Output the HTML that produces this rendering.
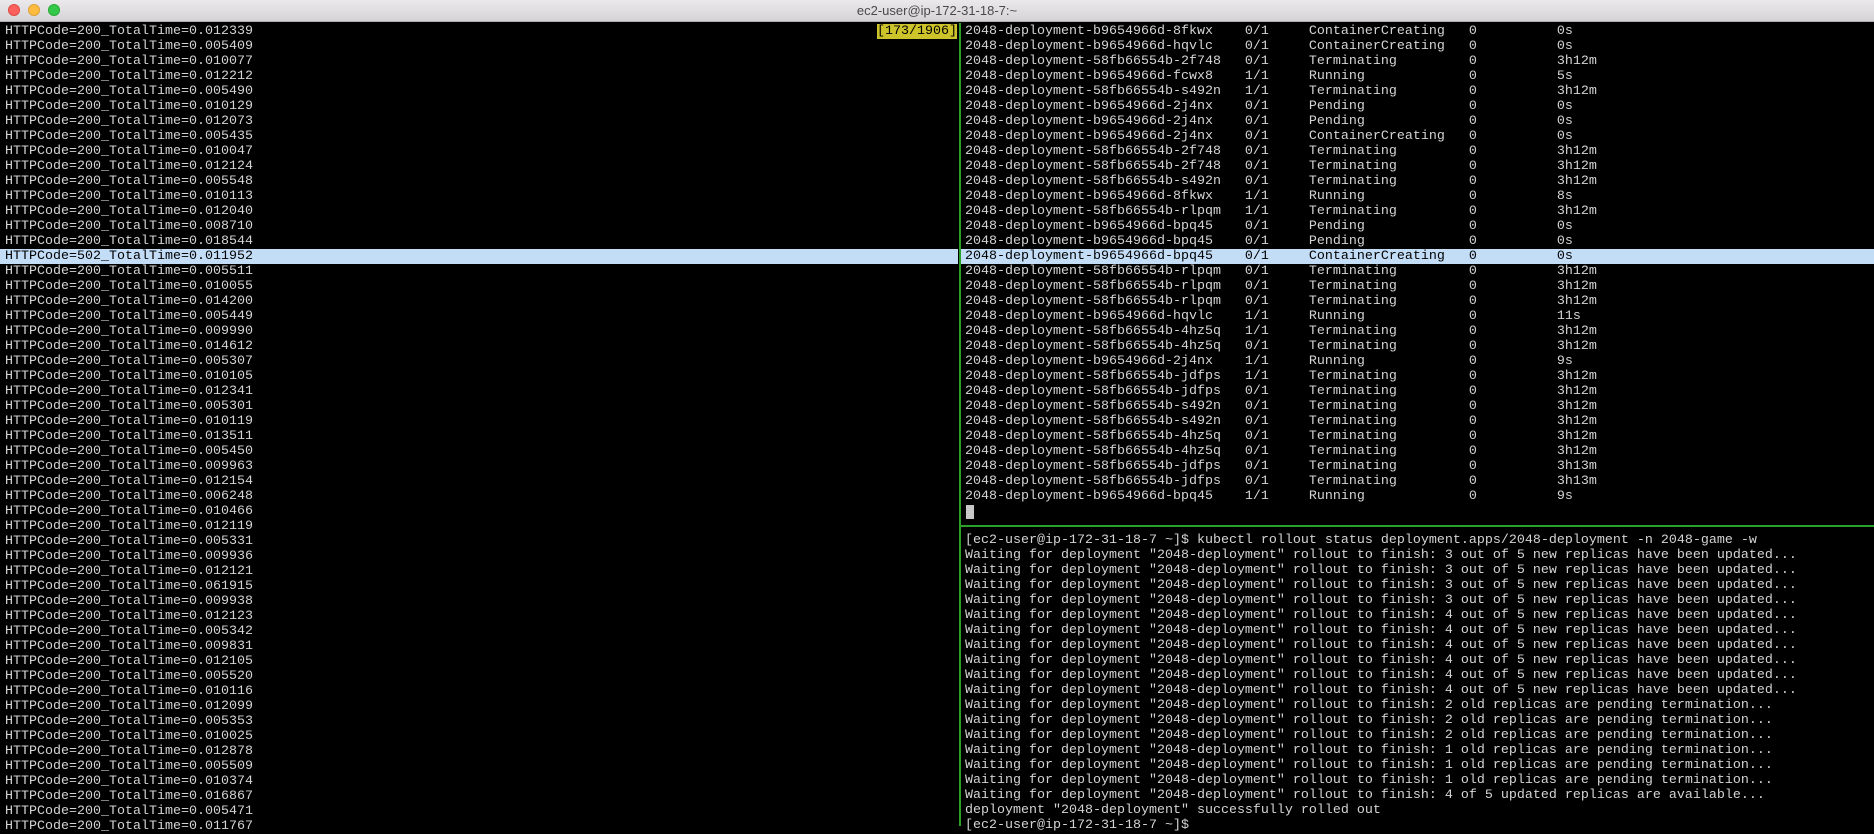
<!DOCTYPE html>
<html><head><meta charset="utf-8"><style>
*{margin:0;padding:0;box-sizing:border-box}
body{width:1874px;height:826px;background:#000;overflow:hidden;position:relative;font-family:"Liberation Mono","DejaVu Sans Mono",monospace}
#tb{position:absolute;left:0;top:0;width:1874px;height:22px;background:linear-gradient(#ebe9eb,#d5d3d5);border-bottom:1px solid #b0aeb0}
#tb .t{position:absolute;left:0;right:0;top:3px;text-align:center;font:13px "Liberation Sans",sans-serif;color:#4a4a4a}
.dot{position:absolute;top:4px;width:12px;height:12px;border-radius:50%}
pre{position:absolute;font-family:"Liberation Mono","DejaVu Sans Mono",monospace;font-size:13.333px;line-height:15px;color:#d4d4d4;white-space:pre}
.hl{position:absolute;height:15px;background:#c3ddf6}
</style></head><body>
<div id="tb"><div class="dot" style="left:8px;background:#fc605c;border:1px solid #de4a45"></div><div class="dot" style="left:28px;background:#fdbc40;border:1px solid #dea236"></div><div class="dot" style="left:48px;background:#34c84a;border:1px solid #27aa35"></div><div class="t">ec2-user@ip-172-31-18-7:~</div></div>
<div class="hl" style="left:0;top:249px;width:958px"></div>
<div class="hl" style="left:961px;top:249px;width:913px"></div>
<div style="position:absolute;left:959px;top:23px;width:2px;height:803px;background:#2aa02a"></div>
<div style="position:absolute;left:961px;top:525px;width:913px;height:2px;background:#2aa02a"></div>
<div style="position:absolute;left:877px;top:24px;width:80px;height:15px;background:#cdc42c"></div>
<pre style="left:877px;top:24px;color:#000">[173/1906]</pre>
<div style="position:absolute;left:966px;top:505px;width:8px;height:14px;background:#c8c8c8"></div>
<pre style="left:5px;top:24px">HTTPCode=200_TotalTime=0.012339
HTTPCode=200_TotalTime=0.005409
HTTPCode=200_TotalTime=0.010077
HTTPCode=200_TotalTime=0.012212
HTTPCode=200_TotalTime=0.005490
HTTPCode=200_TotalTime=0.010129
HTTPCode=200_TotalTime=0.012073
HTTPCode=200_TotalTime=0.005435
HTTPCode=200_TotalTime=0.010047
HTTPCode=200_TotalTime=0.012124
HTTPCode=200_TotalTime=0.005548
HTTPCode=200_TotalTime=0.010113
HTTPCode=200_TotalTime=0.012040
HTTPCode=200_TotalTime=0.008710
HTTPCode=200_TotalTime=0.018544
<span style="color:#000">HTTPCode=502_TotalTime=0.011952</span>
HTTPCode=200_TotalTime=0.005511
HTTPCode=200_TotalTime=0.010055
HTTPCode=200_TotalTime=0.014200
HTTPCode=200_TotalTime=0.005449
HTTPCode=200_TotalTime=0.009990
HTTPCode=200_TotalTime=0.014612
HTTPCode=200_TotalTime=0.005307
HTTPCode=200_TotalTime=0.010105
HTTPCode=200_TotalTime=0.012341
HTTPCode=200_TotalTime=0.005301
HTTPCode=200_TotalTime=0.010119
HTTPCode=200_TotalTime=0.013511
HTTPCode=200_TotalTime=0.005450
HTTPCode=200_TotalTime=0.009963
HTTPCode=200_TotalTime=0.012154
HTTPCode=200_TotalTime=0.006248
HTTPCode=200_TotalTime=0.010466
HTTPCode=200_TotalTime=0.012119
HTTPCode=200_TotalTime=0.005331
HTTPCode=200_TotalTime=0.009936
HTTPCode=200_TotalTime=0.012121
HTTPCode=200_TotalTime=0.061915
HTTPCode=200_TotalTime=0.009938
HTTPCode=200_TotalTime=0.012123
HTTPCode=200_TotalTime=0.005342
HTTPCode=200_TotalTime=0.009831
HTTPCode=200_TotalTime=0.012105
HTTPCode=200_TotalTime=0.005520
HTTPCode=200_TotalTime=0.010116
HTTPCode=200_TotalTime=0.012099
HTTPCode=200_TotalTime=0.005353
HTTPCode=200_TotalTime=0.010025
HTTPCode=200_TotalTime=0.012878
HTTPCode=200_TotalTime=0.005509
HTTPCode=200_TotalTime=0.010374
HTTPCode=200_TotalTime=0.016867
HTTPCode=200_TotalTime=0.005471
HTTPCode=200_TotalTime=0.011767</pre>
<pre style="left:965px;top:24px">2048-deployment-b9654966d-8fkwx    0/1     ContainerCreating   0          0s
2048-deployment-b9654966d-hqvlc    0/1     ContainerCreating   0          0s
2048-deployment-58fb66554b-2f748   0/1     Terminating         0          3h12m
2048-deployment-b9654966d-fcwx8    1/1     Running             0          5s
2048-deployment-58fb66554b-s492n   1/1     Terminating         0          3h12m
2048-deployment-b9654966d-2j4nx    0/1     Pending             0          0s
2048-deployment-b9654966d-2j4nx    0/1     Pending             0          0s
2048-deployment-b9654966d-2j4nx    0/1     ContainerCreating   0          0s
2048-deployment-58fb66554b-2f748   0/1     Terminating         0          3h12m
2048-deployment-58fb66554b-2f748   0/1     Terminating         0          3h12m
2048-deployment-58fb66554b-s492n   0/1     Terminating         0          3h12m
2048-deployment-b9654966d-8fkwx    1/1     Running             0          8s
2048-deployment-58fb66554b-rlpqm   1/1     Terminating         0          3h12m
2048-deployment-b9654966d-bpq45    0/1     Pending             0          0s
2048-deployment-b9654966d-bpq45    0/1     Pending             0          0s
<span style="color:#000">2048-deployment-b9654966d-bpq45    0/1     ContainerCreating   0          0s</span>
2048-deployment-58fb66554b-rlpqm   0/1     Terminating         0          3h12m
2048-deployment-58fb66554b-rlpqm   0/1     Terminating         0          3h12m
2048-deployment-58fb66554b-rlpqm   0/1     Terminating         0          3h12m
2048-deployment-b9654966d-hqvlc    1/1     Running             0          11s
2048-deployment-58fb66554b-4hz5q   1/1     Terminating         0          3h12m
2048-deployment-58fb66554b-4hz5q   0/1     Terminating         0          3h12m
2048-deployment-b9654966d-2j4nx    1/1     Running             0          9s
2048-deployment-58fb66554b-jdfps   1/1     Terminating         0          3h12m
2048-deployment-58fb66554b-jdfps   0/1     Terminating         0          3h12m
2048-deployment-58fb66554b-s492n   0/1     Terminating         0          3h12m
2048-deployment-58fb66554b-s492n   0/1     Terminating         0          3h12m
2048-deployment-58fb66554b-4hz5q   0/1     Terminating         0          3h12m
2048-deployment-58fb66554b-4hz5q   0/1     Terminating         0          3h12m
2048-deployment-58fb66554b-jdfps   0/1     Terminating         0          3h13m
2048-deployment-58fb66554b-jdfps   0/1     Terminating         0          3h13m
2048-deployment-b9654966d-bpq45    1/1     Running             0          9s</pre>
<pre style="left:965px;top:533px">[ec2-user@ip-172-31-18-7 ~]$ kubectl rollout status deployment.apps/2048-deployment -n 2048-game -w
Waiting for deployment "2048-deployment" rollout to finish: 3 out of 5 new replicas have been updated...
Waiting for deployment "2048-deployment" rollout to finish: 3 out of 5 new replicas have been updated...
Waiting for deployment "2048-deployment" rollout to finish: 3 out of 5 new replicas have been updated...
Waiting for deployment "2048-deployment" rollout to finish: 3 out of 5 new replicas have been updated...
Waiting for deployment "2048-deployment" rollout to finish: 4 out of 5 new replicas have been updated...
Waiting for deployment "2048-deployment" rollout to finish: 4 out of 5 new replicas have been updated...
Waiting for deployment "2048-deployment" rollout to finish: 4 out of 5 new replicas have been updated...
Waiting for deployment "2048-deployment" rollout to finish: 4 out of 5 new replicas have been updated...
Waiting for deployment "2048-deployment" rollout to finish: 4 out of 5 new replicas have been updated...
Waiting for deployment "2048-deployment" rollout to finish: 4 out of 5 new replicas have been updated...
Waiting for deployment "2048-deployment" rollout to finish: 2 old replicas are pending termination...
Waiting for deployment "2048-deployment" rollout to finish: 2 old replicas are pending termination...
Waiting for deployment "2048-deployment" rollout to finish: 2 old replicas are pending termination...
Waiting for deployment "2048-deployment" rollout to finish: 1 old replicas are pending termination...
Waiting for deployment "2048-deployment" rollout to finish: 1 old replicas are pending termination...
Waiting for deployment "2048-deployment" rollout to finish: 1 old replicas are pending termination...
Waiting for deployment "2048-deployment" rollout to finish: 4 of 5 updated replicas are available...
deployment "2048-deployment" successfully rolled out
[ec2-user@ip-172-31-18-7 ~]$</pre>
</body></html>
